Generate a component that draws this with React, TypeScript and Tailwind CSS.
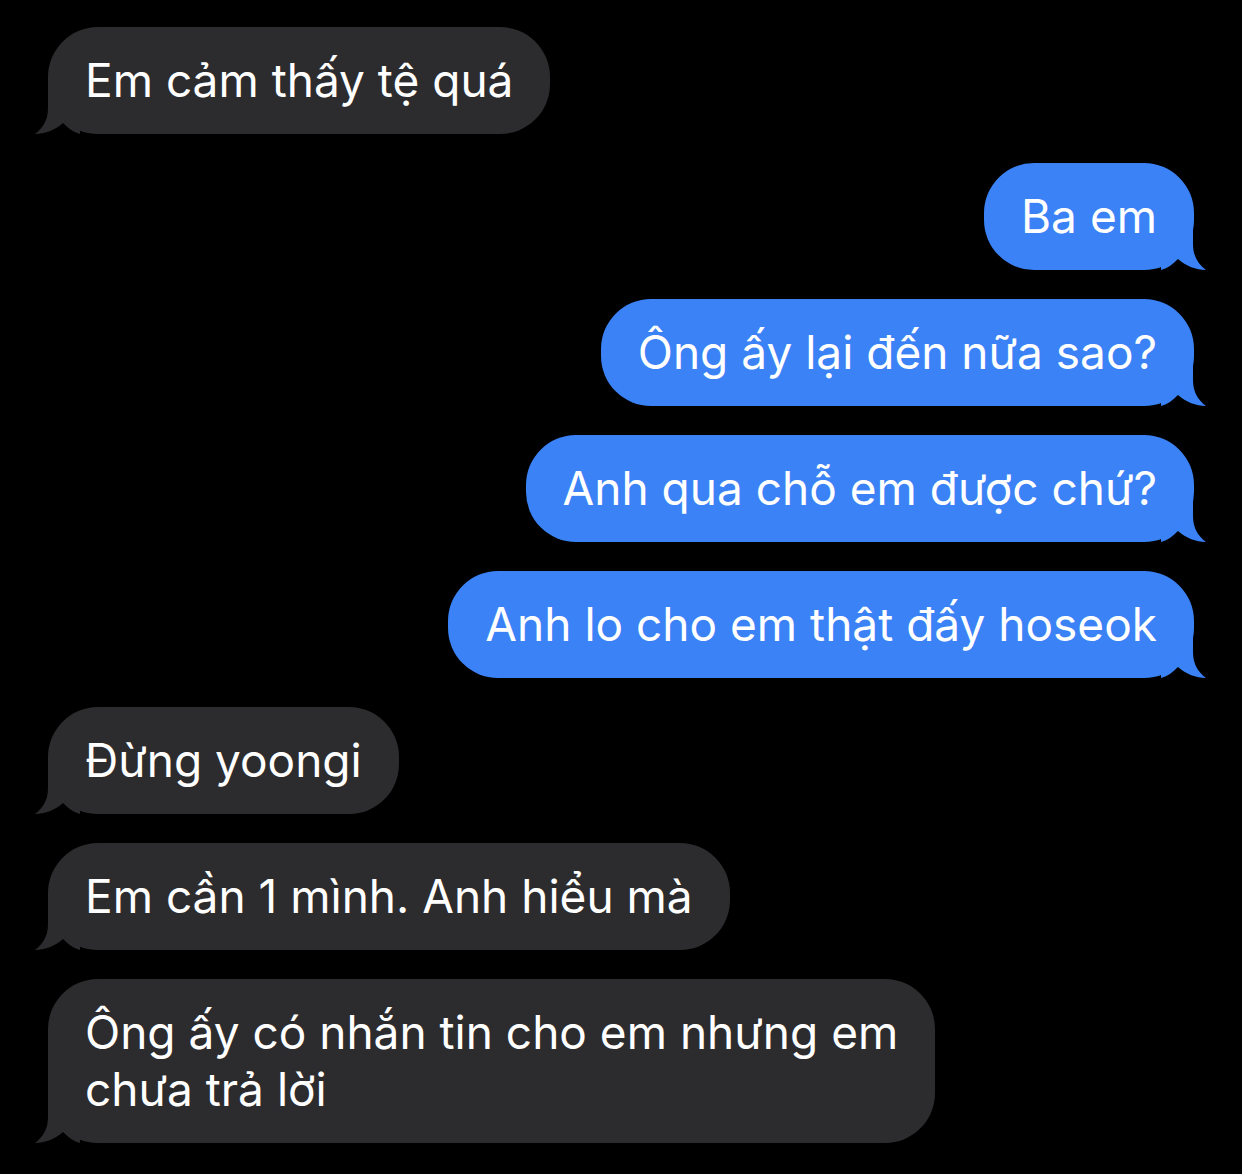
import React from "react";

type Msg = { me: boolean; lines: string[] };

const messages: Msg[] = [
  { me: false, lines: ["Em cảm thấy tệ quá"] },
  { me: true, lines: ["Ba em"] },
  { me: true, lines: ["Ông ấy lại đến nữa sao?"] },
  { me: true, lines: ["Anh qua chỗ em được chứ?"] },
  { me: true, lines: ["Anh lo cho em thật đấy hoseok"] },
  { me: false, lines: ["Đừng yoongi"] },
  { me: false, lines: ["Em cần 1 mình. Anh hiểu mà"] },
  { me: false, lines: ["Ông ấy có nhắn tin cho em nhưng em", "chưa trả lời"] },
];

function Tail({ me }: { me: boolean }) {
  return (
    <svg
      width="45"
      height="50"
      viewBox="0 0 45 50"
      className={
        me
          ? "absolute right-[-12px] bottom-0 -scale-x-100"
          : "absolute left-[-13px] bottom-0"
      }
    >
      <path
        d="M13 0 L13 24 C13 36 8 44 0 50 C10 50 20 46 28 39 C33 44 38 48 45 50 L45 0 Z"
        fill={me ? "#3a82f6" : "#2c2c2e"}
      />
    </svg>
  );
}

function Bubble({ m }: { m: Msg }) {
  return (
    <div className={m.me ? "flex justify-end" : "flex justify-start"}>
      <div className="relative">
        <Tail me={m.me} />
        <div
          className={
            (m.me ? "bg-[#3a82f6]" : "bg-[#2c2c2e]") +
            " relative rounded-[50px] px-[37px] py-[25px] text-white text-[46px] leading-[57px] whitespace-nowrap"
          }
        >
          {m.lines.map((l, i) => (
            <div key={i}>{l}</div>
          ))}
        </div>
      </div>
    </div>
  );
}

export default function App() {
  return (
    <div
      className="min-h-[1174px] w-[1242px] bg-black px-[48px] pt-[27px] flex flex-col gap-[29px]"
      style={{ fontFamily: "Inter, 'Noto Sans', sans-serif" }}
    >
      {messages.map((m, i) => (
        <Bubble key={i} m={m} />
      ))}
    </div>
  );
}
